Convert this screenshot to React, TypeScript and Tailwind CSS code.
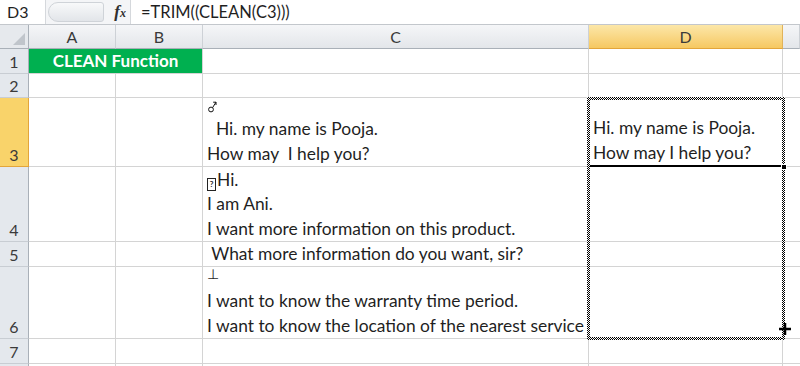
import React from "react";

const COLS = ["A", "B", "C", "D", "E"];

type Row = { n: number; h: string; c?: React.ReactNode; d?: React.ReactNode };

const Box = () => (
  <span className="inline-block w-[9px] h-[13px] border border-[#222] align-[-1px] mr-[1px] text-[8px] leading-[11px] text-center font-bold">?</span>
);

const Male = () => (
  <svg width="9" height="12" viewBox="0 0 9 12" className="mt-[3px] ml-[1px]">
    <circle cx="3" cy="8.5" r="2.4" fill="none" stroke="#111" strokeWidth="1" />
    <path d="M4.6 6.6L8 1.2M5.2 1.2H8V4" fill="none" stroke="#111" strokeWidth="1" />
  </svg>
);

const ROWS: Row[] = [
  { n: 1, h: "h-[25px]" },
  { n: 2, h: "h-[24px]" },
  {
    n: 3,
    h: "h-[69px]",
    c: (
      <>
        <span className="h-[19px]">
          <Male />
        </span>
        <span>{"  Hi. my name is Pooja."}</span>
        <span>{"How may  I help you?"}</span>
      </>
    ),
    d: (
      <>
        <span>Hi. my name is Pooja.</span>
        <span>How may I help you?</span>
      </>
    ),
  },
  {
    n: 4,
    h: "h-[75px]",
    c: (
      <>
        <span>
          <Box />
          Hi.
        </span>
        <span>I am Ani.</span>
        <span>I want more information on this product.</span>
      </>
    ),
  },
  { n: 5, h: "h-[25px]", c: <span>{" What more information do you want, sir?"}</span> },
  {
    n: 6,
    h: "h-[72px]",
    c: (
      <>
        <span className="text-[14px] leading-[18px] mb-[6px] font-['DejaVu_Sans',sans-serif]">⊥</span>
        <span>I want to know the warranty time period.</span>
        <span>I want to know the location of the nearest service</span>
      </>
    ),
  },
  { n: 7, h: "h-[25px]" },
  { n: 8, h: "h-[25px]" },
];

const widths = ["w-[87px]", "w-[87px]", "w-[386px]", "w-[194px]", "flex-1"];

const ANTS = "absolute bg-[repeating-conic-gradient(#000000_0_25%,#ffffff_0_50%)] bg-[length:2px_2px] pointer-events-none";

export default function App() {
  return (
    <div className="relative w-[800px] h-[366px] overflow-hidden bg-white text-[#1f1f1f] font-['Lato','Open_Sans',sans-serif]">
      {/* formula bar */}
      <div className="flex h-[25px] border-b border-[#c3c7cc] bg-[#f4f5f7] text-[16px] leading-[24px]">
        <div className="w-[46px] bg-white pl-[7px] border-r border-[#d5d8dc]">D3</div>
        <div className="w-[84px] flex items-center">
          <div className="ml-[2px] h-[20px] w-[56px] rounded-l-[10px] rounded-r-[3px] bg-gradient-to-b from-[#f8f9fa] to-[#e2e5e9] border border-[#cfd3d8]" />
          <span className="ml-auto mr-[4px] font-['Liberation_Serif',serif] italic font-bold text-[17px] text-[#2f2f2f]">
            f<span className="text-[12px]">x</span>
          </span>
        </div>
        <div className="flex-1 bg-white pl-[10px] border-l border-[#d5d8dc] text-[16.5px]">=TRIM((CLEAN(C3)))</div>
      </div>

      {/* column headers */}
      <div className="flex h-[24px] text-[16px] text-[#3a3a3a]">
        <div className="w-[29px] bg-[#e6e9ed] border-r border-b border-[#a9b0b8] flex items-end justify-end p-[3px]">
          <svg width="12" height="12" viewBox="0 0 12 12">
            <polygon points="12,0 12,12 0,12" fill="#c0c5cb" />
          </svg>
        </div>
        {COLS.map((c, i) => (
          <div
            key={c}
            className={`${widths[i]} flex items-center justify-center border-r border-b ${
              c === "D"
                ? "bg-gradient-to-b from-[#fce7a8] to-[#f6c860] border-r-[#e1b35a] border-b-[#e3a53a]"
                : "bg-gradient-to-b from-[#f5f6f8] to-[#e3e6ea] border-r-[#cdd1d6] border-b-[#a9b0b8]"
            }`}
          >
            {c === "E" ? "" : c}
          </div>
        ))}
      </div>

      {/* rows */}
      {ROWS.map((r) => (
        <div key={r.n} className={`flex ${r.h} text-[17.4px] leading-[24.5px]`}>
          <div
            className={`w-[29px] flex items-end justify-center border-r border-b text-[16px] leading-[23px] text-[#3a3a3a] ${
              r.n === 3
                ? "bg-[#f9d36a] border-r-[#e3a53a] border-b-[#e3a53a]"
                : "bg-[#e4e8ed] border-r-[#a9b0b8] border-b-[#c8cdd3]"
            }`}
          >
            {r.n < 8 ? r.n : ""}
          </div>
          {r.n === 1 ? (
            <div className="w-[174px] bg-[#00b050] text-white font-bold text-[17px] flex items-center justify-center border-b border-r border-[#d4d4d4]">
              CLEAN Function
            </div>
          ) : (
            <>
              <div className="w-[87px] border-r border-b border-[#d4d4d4]" />
              <div className="w-[87px] border-r border-b border-[#d4d4d4]" />
            </>
          )}
          <div className="w-[386px] border-r border-b border-[#d4d4d4] flex flex-col justify-end pl-[4px] whitespace-pre overflow-hidden">
            {r.c}
          </div>
          <div
            className={`w-[194px] flex flex-col justify-end pl-[4px] whitespace-pre ${
              r.n === 3 ? "border-b-2 border-black border-r border-r-[#d4d4d4]" : "border-r border-b border-[#d4d4d4]"
            }`}
          >
            {r.d}
          </div>
          <div className="flex-1 border-b border-[#d4d4d4]" />
        </div>
      ))}

      {/* copy marquee over D3:D6 */}
      <div className={`${ANTS} left-[587px] top-[97px] w-[198px] h-[3px]`} />
      <div className={`${ANTS} left-[587px] top-[337px] w-[198px] h-[3px]`} />
      <div className={`${ANTS} left-[587px] top-[97px] w-[3px] h-[243px]`} />
      <div className={`${ANTS} left-[782px] top-[97px] w-[3px] h-[243px]`} />
      {/* fill handle */}
      <div className="absolute left-[781px] top-[164px] w-[6px] h-[6px] bg-black border border-white" />
      {/* cursor */}
      <svg className="absolute left-[778px] top-[322px]" width="14" height="14" viewBox="0 0 14 14">
        <path d="M7 1v12M1 7h12" stroke="#000" strokeWidth="2.5" />
      </svg>
    </div>
  );
}
